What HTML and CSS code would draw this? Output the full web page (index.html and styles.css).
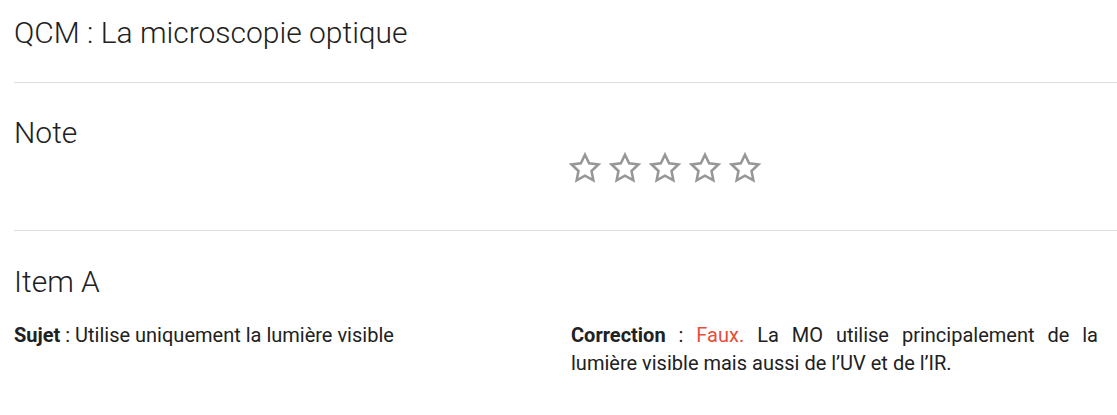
FILE: index.html
```html
<!DOCTYPE html>
<html lang="fr">
<head>
<meta charset="utf-8">
<link rel="stylesheet" href="styles.css">
</head>
<body>
<div class="page">
  <section class="block block-title">
    <h1 class="title">QCM : La microscopie optique</h1>
  </section>
  <section class="block block-note">
    <h2 class="heading">Note</h2>
    <div class="row">
      <div class="col"></div>
      <div class="col stars">
        <svg class="star" viewBox="0 0 24 24"><path d="M12 2.6l2.9 6.1 6.6.8-4.9 4.6 1.3 6.6L12 17.4l-5.9 3.3 1.3-6.6-4.9-4.6 6.6-.8z"/></svg>
        <svg class="star" viewBox="0 0 24 24"><path d="M12 2.6l2.9 6.1 6.6.8-4.9 4.6 1.3 6.6L12 17.4l-5.9 3.3 1.3-6.6-4.9-4.6 6.6-.8z"/></svg>
        <svg class="star" viewBox="0 0 24 24"><path d="M12 2.6l2.9 6.1 6.6.8-4.9 4.6 1.3 6.6L12 17.4l-5.9 3.3 1.3-6.6-4.9-4.6 6.6-.8z"/></svg>
        <svg class="star" viewBox="0 0 24 24"><path d="M12 2.6l2.9 6.1 6.6.8-4.9 4.6 1.3 6.6L12 17.4l-5.9 3.3 1.3-6.6-4.9-4.6 6.6-.8z"/></svg>
        <svg class="star" viewBox="0 0 24 24"><path d="M12 2.6l2.9 6.1 6.6.8-4.9 4.6 1.3 6.6L12 17.4l-5.9 3.3 1.3-6.6-4.9-4.6 6.6-.8z"/></svg>
      </div>
    </div>
  </section>
  <section class="block block-item">
    <h2 class="heading">Item A</h2>
    <div class="row item-row">
      <p class="col text"><strong>Sujet</strong> : Utilise uniquement la lumière visible</p>
      <p class="col text justify"><strong>Correction</strong> : <span class="false">Faux.</span> La MO utilise principalement de la lumière visible mais aussi de l’UV et de l’IR.</p>
    </div>
  </section>
</div>
</body>
</html>
```
FILE: styles.css
```css
html, body {
  margin: 0;
  padding: 0;
  background: #ffffff;
}
body {
  font-family: Roboto, "Liberation Sans", sans-serif;
  color: #212121;
  overflow: hidden;
}
.page {
  padding-left: 14px;
}
.block {
  border-bottom: 1px solid #dedede;
}
.block-item {
  border-bottom: none;
  padding-top: 35px;
}
.title {
  margin: 0;
  padding: 15px 0 31px;
  font-size: 30px;
  font-weight: 300;
  line-height: 36px;
}
.heading {
  margin: 0;
  font-size: 30px;
  font-weight: 300;
  line-height: 32px;
}
.block-note {
  padding-top: 34px;
}
.row {
  display: grid;
  grid-template-columns: 557px 527px;
}
.stars {
  display: flex;
  gap: 6px;
  margin: 2px 0 0 -3px;
  padding-bottom: 45px;
}
.star {
  width: 34px;
  height: 34px;
  fill: none;
  stroke: #979797;
  stroke-width: 1.8;
  stroke-linejoin: miter;
}
.item-row {
  margin-top: 23px;
}
.text {
  margin: 0;
  font-size: 20px;
  line-height: 28px;
}
.justify {
  text-align: justify;
}
.false {
  color: #e74c3c;
}
strong {
  font-weight: 700;
}
```
